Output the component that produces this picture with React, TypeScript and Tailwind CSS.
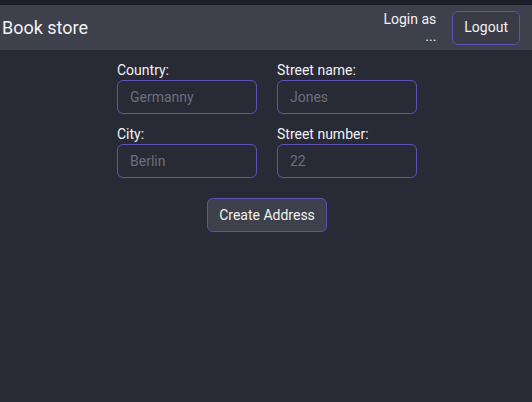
import React from 'react';

const font = { fontFamily: 'Roboto, "Liberation Sans", sans-serif' };

function Field({ label, placeholder }: { label: string; placeholder: string }) {
    return (
        <label className="flex flex-col w-[140px]">
            <span className="text-[14px] leading-[18px] text-[#f2f2f2] mb-[1px]">{label}</span>
            <input
                placeholder={placeholder}
                className="h-[34px] w-[140px] rounded-[6px] border border-[#6150b8] bg-transparent px-[12px] text-[14px] text-[#e5e5e5] placeholder:text-[#6d6f7b] outline-none"
            />
        </label>
    );
}

export default function App() {
    return (
        <div className="min-h-[402px] w-full bg-[#282a36] text-white" style={font}>
            <div className="h-[5px] bg-[#1f1f29]" />
            <header className="flex h-[45px] items-center justify-between bg-[#3e404c] pl-[2px] pr-[12px]">
                <h1 className="text-[18px] text-[#f2f2f2]">Book store</h1>
                <div className="flex items-center gap-[16px]">
                    <span className="w-[56px] text-right text-[14px] leading-[17px] text-[#f2f2f2]">Login as ...</span>
                    <button className="h-[34px] rounded-[6px] border border-[#6150b8] bg-[#393b47] px-[11px] text-[14px] text-[#f2f2f2]">
                        Logout
                    </button>
                </div>
            </header>
            <main className="flex flex-col items-center pl-[2px] pt-[11px]">
                <div className="grid grid-cols-2 gap-x-[20px] gap-y-[11px]">
                    <Field label="Country:" placeholder="Germanny" />
                    <Field label="Street name:" placeholder="Jones" />
                    <Field label="City:" placeholder="Berlin" />
                    <Field label="Street number:" placeholder="22" />
                </div>
                <button className="mt-[20px] h-[34px] w-[120px] rounded-[6px] border border-[#6150b8] bg-[#3e404c] text-[14px] text-[#f2f2f2]">
                    Create Address
                </button>
            </main>
        </div>
    );
}
